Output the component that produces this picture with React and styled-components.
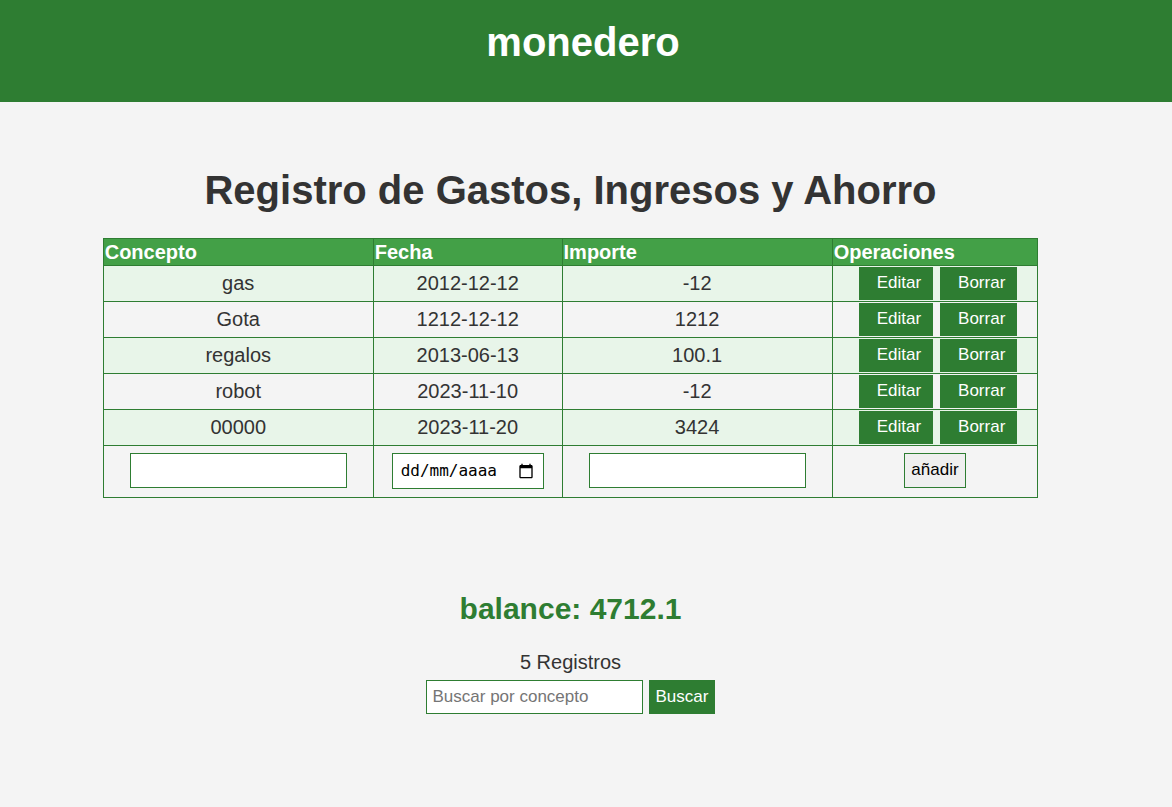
import React from "react";
import styled, { createGlobalStyle, css } from "styled-components";

const GlobalStyle = createGlobalStyle`
  body {
    margin: 0;
    background: #f4f4f4;
    color: #333;
    font-family: "Liberation Sans", Arial, sans-serif;
    font-size: 20px;
    line-height: 24px;
  }
  *, *::before, *::after {
    box-sizing: border-box;
  }
`;

const Header = styled.header`
  padding: 19px 6px 37px 0;
  background: #2e7d32;
  color: #fff;
  text-align: center;
`;

const SiteTitle = styled.h1`
  margin: 0;
  font-size: 40px;
  line-height: 46px;
`;

const Main = styled.main`
  display: flex;
  flex-direction: column;
  align-items: center;
  padding: 65px 31px 40px 0;
  text-align: center;
`;

const PageTitle = styled.h2`
  margin: 0 0 25px;
  font-size: 40px;
  line-height: 46px;
`;

const Table = styled.table`
  width: 82%;
  table-layout: fixed;
  border-collapse: collapse;
`;

const Col = styled.col`
  width: ${(p) => p.$share};
`;

const HeadCell = styled.th`
  height: 27px;
  padding: 0 1px;
  border: 1px solid #2e7d32;
  background: #43a047;
  color: #fff;
  text-align: left;
`;

const Cell = styled.td`
  height: 36px;
  padding: 0 0 2px;
  border: 1px solid #2e7d32;
`;

const ActionCell = styled(Cell)`
  padding: 0;
`;

const Row = styled.tr`
  &:nth-child(odd) {
    background: #e8f5e9;
  }
`;

const FormRow = styled.tr`
  ${Cell} {
    height: 52px;
  }
`;

const Actions = styled.div`
  display: flex;
  justify-content: center;
  gap: 7px;
  padding-left: 6px;
`;

const controlText = css`
  font-family: inherit;
  font-size: 17px;
  line-height: 20px;
`;

const Button = styled.button`
  ${controlText}
  height: ${(p) => (p.$plain ? "35px" : "34px")};
  padding: ${(p) => (p.$plain ? "0 6px 2px" : "0 6px")};
  border: 1px solid #2e7d32;
  border-radius: 0;
  background: ${(p) => (p.$plain ? "#efefef" : "#2e7d32")};
  color: ${(p) => (p.$plain ? "#000" : "#fff")};
  vertical-align: middle;
`;

const RowButton = styled(Button)`
  height: 33px;
  padding: 0 11px 2px 17px;
`;

const TextInput = styled.input`
  ${controlText}
  width: 217px;
  max-width: 100%;
  height: ${(p) => (p.$tall ? "35px" : "34px")};
  padding: 0 6px;
  border: 1px solid #2e7d32;
  border-radius: 0;
  background: #fff;
  vertical-align: middle;
  &::placeholder {
    color: #757575;
    opacity: 1;
  }
`;

const DateField = styled.label`
  display: inline-flex;
  align-items: center;
  justify-content: space-between;
  width: 152px;
  height: 36px;
  padding: 0 9px 0 8px;
  border: 1px solid #2e7d32;
  background: #fff;
  vertical-align: middle;
`;

const DateInput = styled.input`
  width: 108px;
  padding: 0;
  border: 0;
  background: none;
  font-family: "DejaVu Sans Mono", monospace;
  font-size: 16px;
  &::placeholder {
    color: #000;
    opacity: 1;
  }
`;

const Balance = styled.h3`
  margin: 93px 0 23px;
  color: #2e7d32;
  font-size: 30px;
  line-height: 36px;
`;

const Count = styled.p`
  margin: 0 0 6px;
`;

const SearchForm = styled.form`
  display: flex;
  justify-content: center;
  gap: 6px;
`;

const records = [
  ["gas", "2012-12-12", "-12"],
  ["Gota", "1212-12-12", "1212"],
  ["regalos", "2013-06-13", "100.1"],
  ["robot", "2023-11-10", "-12"],
  ["00000", "2023-11-20", "3424"],
];

function CalendarIcon() {
  return (
    <svg width="16" height="16" viewBox="0 0 24 24" aria-hidden="true">
      <path
        fill="#000"
        d="M20 3h-1V1h-2v2H7V1H5v2H4c-1.100 0-2 .9-2 2v16c0 1.100.9 2 2 2h16c1.100 0 2-.9 2-2V5c0-1.100-.9-2-2-2zm0 18H4V8h16v13z"
      />
    </svg>
  );
}

export default function App() {
  return (
    <>
      <GlobalStyle />
      <Header>
        <SiteTitle>monedero</SiteTitle>
      </Header>
      <Main>
        <PageTitle>Registro de Gastos, Ingresos y Ahorro</PageTitle>
        <Table>
          <colgroup>
            <Col $share="28.9%" />
            <Col $share="20.2%" />
            <Col $share="28.9%" />
            <Col $share="22%" />
          </colgroup>
          <thead>
            <tr>
              <HeadCell scope="col">Concepto</HeadCell>
              <HeadCell scope="col">Fecha</HeadCell>
              <HeadCell scope="col">Importe</HeadCell>
              <HeadCell scope="col">Operaciones</HeadCell>
            </tr>
          </thead>
          <tbody>
            {records.map(([concept, date, amount]) => (
              <Row key={concept}>
                <Cell>{concept}</Cell>
                <Cell>{date}</Cell>
                <Cell>{amount}</Cell>
                <ActionCell>
                  <Actions>
                    <RowButton type="button">Editar</RowButton>
                    <RowButton type="button">Borrar</RowButton>
                  </Actions>
                </ActionCell>
              </Row>
            ))}
          </tbody>
          <tfoot>
            <FormRow>
              <Cell>
                <TextInput type="text" aria-label="Concepto" $tall />
              </Cell>
              <Cell>
                <DateField>
                  <DateInput type="text" aria-label="Fecha" placeholder="dd/mm/aaaa" />
                  <CalendarIcon />
                </DateField>
              </Cell>
              <Cell>
                <TextInput type="text" aria-label="Importe" $tall />
              </Cell>
              <Cell>
                <Button type="submit" $plain>
                  añadir
                </Button>
              </Cell>
            </FormRow>
          </tfoot>
        </Table>
        <Balance>balance: 4712.1</Balance>
        <Count>5 Registros</Count>
        <SearchForm>
          <TextInput type="text" aria-label="Buscar por concepto" placeholder="Buscar por concepto" />
          <Button type="submit">Buscar</Button>
        </SearchForm>
      </Main>
    </>
  );
}
